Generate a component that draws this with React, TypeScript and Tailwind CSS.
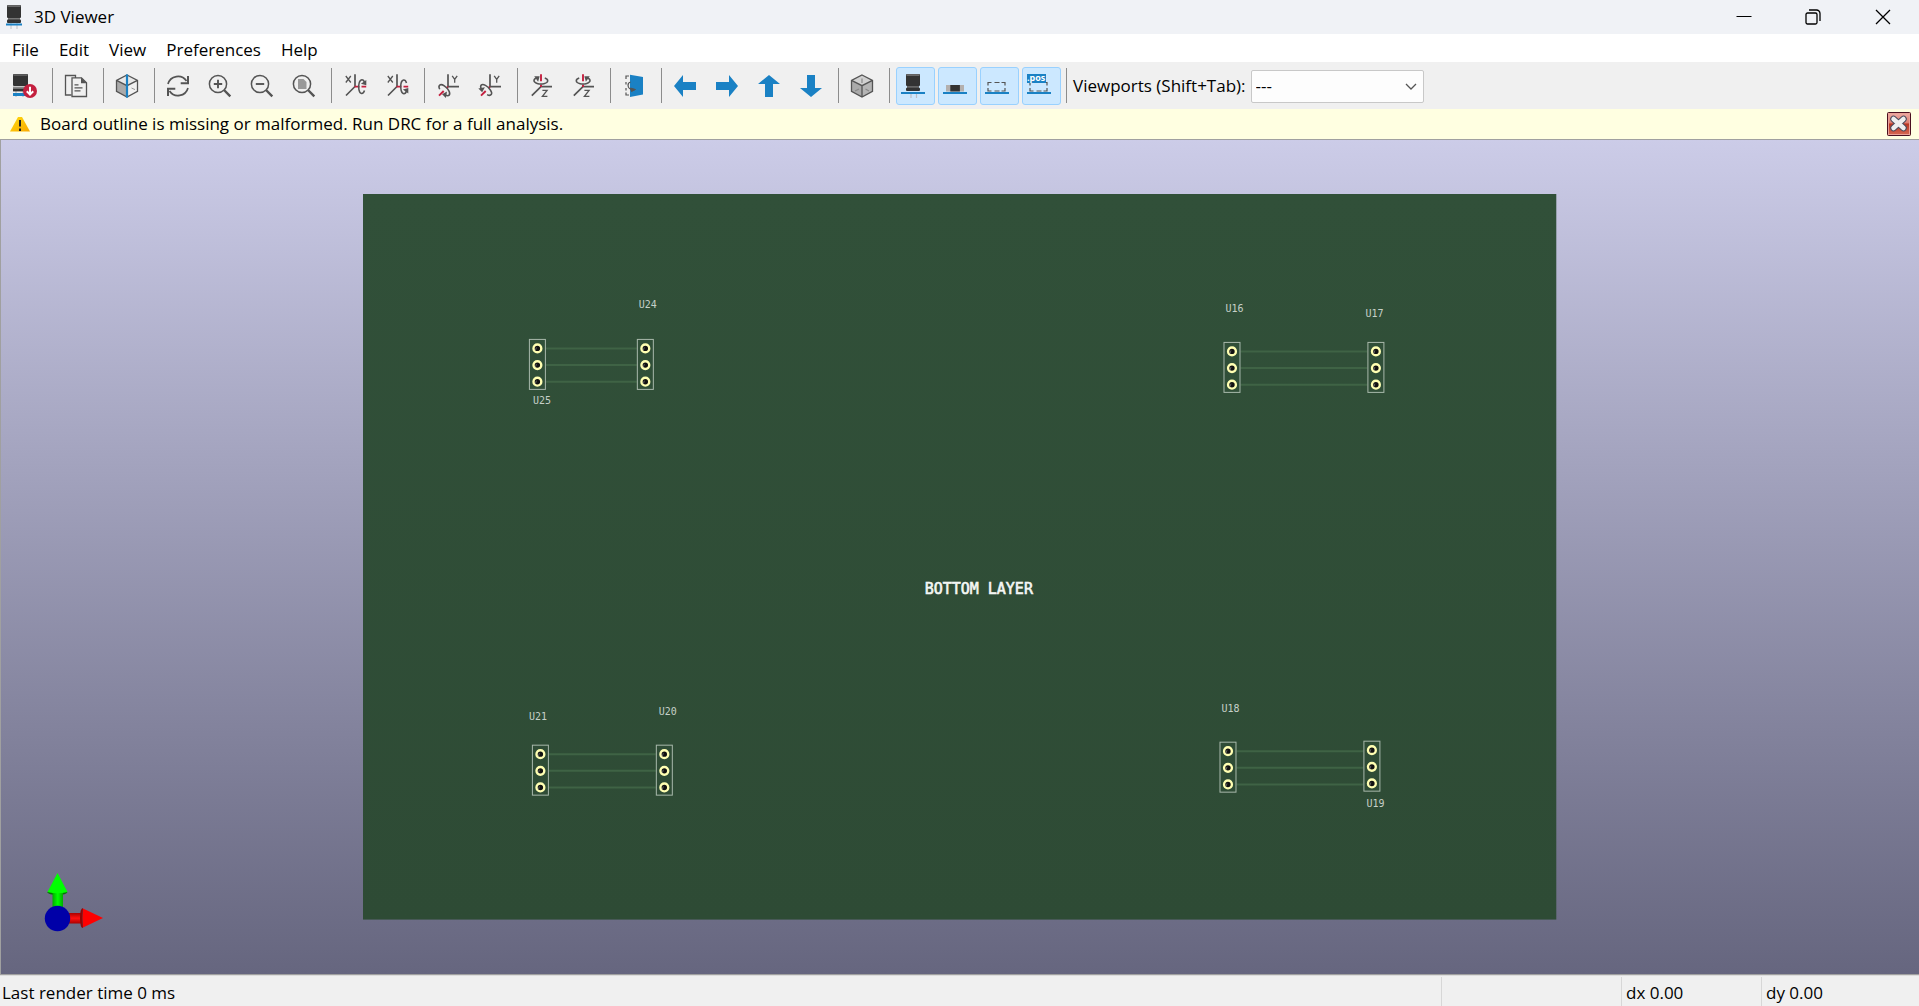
import React from "react";

type IconProps = { children: React.ReactNode };

const Icon = ({ children }: IconProps) => (
  <svg viewBox="0 0 24 24" className="h-6 w-6 shrink-0 overflow-visible" fill="none" aria-hidden="true">
    {children}
  </svg>
);

const GRAY = "#545454";
const RED = "#c4203f";
const BLUE = "#1a81c4";

const Raytrace = () => (
  <Icon>
    <path d="M3 16v7M10 16v7" stroke="#c4c4c4" strokeWidth="1.4" />
    <rect x="0" y="0" width="15" height="12" rx="1" fill="#333" />
    <rect x="0.5" y="0.3" width="14" height="1.5" fill="#666" />
    <rect x="0" y="12.6" width="15" height="1.6" fill="#8a8a8a" />
    <rect x="0" y="14.4" width="15" height="3" fill="#333" />
    <rect x="0" y="19" width="13" height="3" fill={BLUE} />
    <circle cx="17" cy="17" r="7" fill={RED} />
    <path d="M17 12.7v7M13.8 17.2l3.2 3.4 3.2-3.4" stroke="#fff" strokeWidth="2" />
  </Icon>
);

const Copy = () => (
  <Icon>
    <path d="M7.5 21H1.5V1.5h10V4" stroke={GRAY} strokeWidth="1.3" />
    <path d="M8 3.8h9.5l5 5v13.7H8z" stroke={GRAY} strokeWidth="1.3" />
    <path d="M17 3.5v5.8h5.8z" fill={GRAY} />
    <path d="M10.5 10.8h4M10.5 13.8h8M10.5 16.8h6" stroke={GRAY} strokeWidth="1.2" />
  </Icon>
);

const Cube = ({ blue = false }: { blue?: boolean }) => (
  <Icon>
    <path d="M1.5 6.3 12 11.7V23L1.5 17.4z" fill="#aaa" />
    <path d="M12 1 22.5 6.3 12 11.7 1.5 6.3z" fill={blue ? "#e8e8e8" : "#d0d0d0"} />
    <path d="M22.5 6.3 12 11.7V23l10.5-5.6z" fill={blue ? "#f1f1f1" : "#b5b5b5"} />
    <path d="M12 1 22.5 6.3v11L12 23 1.5 17.3v-11zM1.5 6.3 12 11.7l10.5-5.4M12 11.7V23" stroke={GRAY} strokeWidth="1.3" />
    {blue ? (
      <>
        <path d="M12 .4v23.2" stroke={BLUE} strokeWidth="2.2" />
        <path d="m16.5 14 3.5 1.6" stroke="#999" />
      </>
    ) : (
      <path d="M12 4.5V9M5 17l4-2M15.5 15l3.5 2" stroke="#8a8a8a" strokeWidth="1.2" />
    )}
  </Icon>
);

const Refresh = () => (
  <Icon>
    <path d="M2 10A10.3 10.3 0 0 1 20.5 7M22 14A10.3 10.3 0 0 1 3.5 17" stroke={GRAY} strokeWidth="1.7" />
    <path d="M22 2v7.3h-7.3" stroke={GRAY} strokeWidth="2" />
    <path d="M2 22v-7.3h7.3" stroke={GRAY} strokeWidth="2" />
  </Icon>
);

const Magnifier = ({ children }: IconProps) => (
  <Icon>
    <circle cx="10" cy="10" r="8.6" stroke={GRAY} strokeWidth="1.5" />
    <path d="m16 16 6.3 6.3" stroke={GRAY} strokeWidth="2.4" />
    {children}
  </Icon>
);

const Loop = ({ flip }: { flip: boolean }) => (
  <g transform={flip ? "scale(.9 -.9)" : "scale(.9)"}>
    <path d="M3 4.2C1.6 8.8-2.2 8.6-3.2 3.2-4.2-2-2.6-7.8.2-7.8c1.2 0 2.2 1 2.8 3" stroke={GRAY} strokeWidth="1.7" />
    <path d="M5-7.5v6L-1-3.2z" fill={GRAY} />
  </g>
);

const RotateX = ({ flip = false }: { flip?: boolean }) => (
  <Icon>
    <path d="m2.8 2 5 6.5m0-6.5-5 6.5" stroke={GRAY} strokeWidth="1.3" />
    <path d="M12 .3v12.2L3 21.5" stroke={GRAY} strokeWidth="1.7" />
    <path d="M11.5 12.7h5M18.5 12.7h4.7" stroke={RED} strokeWidth="1.8" />
    <g transform="translate(18.8 12.7)"><Loop flip={flip} /></g>
  </Icon>
);

const RotateY = ({ flip = false }: { flip?: boolean }) => (
  <Icon>
    <path d="m16.2 1.8 2.5 3.6 2.5-3.6M18.7 5.4v3.4" stroke={GRAY} strokeWidth="1.3" />
    <path d="M12 .3v12.4h11" stroke={GRAY} strokeWidth="1.7" />
    <path d="m12 12.7-1.500 1.500M7.7 17 3 21.7" stroke={RED} strokeWidth="1.9" />
    <g transform="translate(8.300 16) rotate(135)"><Loop flip={flip} /></g>
  </Icon>
);

const RotateZ = ({ flip = false }: { flip?: boolean }) => (
  <Icon>
    <path d="M13.4 16.4h4.7l-4.7 6h5" stroke={GRAY} strokeWidth="1.3" />
    <path d="M23 12.7H12l-9.2 9" stroke={GRAY} strokeWidth="1.7" />
    <path d="M12 .3v7M12 10.500v2.500" stroke={RED} strokeWidth="1.9" />
    <g transform="translate(12 6.8) rotate(-90)"><Loop flip={flip} /></g>
  </Icon>
);

const FlipBoard = () => (
  <Icon>
    <path d="M7 2H4v3M4 8v2.5M4 14v2.5M4 18.5V21h3" stroke={GRAY} strokeWidth="1.2" />
    <path d="m8 .7 13 2.4v17.4L8 23z" fill={BLUE} />
    <path d="M8.5 8C5 9 5 14.5 10 15.7" stroke={GRAY} strokeWidth="1.2" />
    <path d="m8.5 14 5 1.5-4 2z" fill={GRAY} stroke={GRAY} />
  </Icon>
);

const Arrow = ({ d }: { d: string }) => <Icon><path d={d} fill={BLUE} /></Icon>;

const BoardLine = () => <path d="M0 19h24" stroke={BLUE} strokeWidth="2" />;

const Capacitor = () => (
  <Icon>
    <path d="M10 18v6M15.5 18v6" stroke="#bcbcc6" strokeWidth="1.2" />
    <rect x="5" y="0" width="14" height="12" rx="1" fill="#333" />
    <rect x="5.5" y=".3" width="13" height="1.5" fill="#777" />
    <rect x="6" y="12" width="12" height="2" fill="#666" />
    <rect x="5" y="13.8" width="14" height="3.2" rx="1" fill="#333" />
    <BoardLine />
  </Icon>
);

const Chip = () => (
  <Icon>
    <rect x="3" y="11" width="18" height="6.5" fill="#b4b0ae" />
    <rect x="7.3" y="11" width="9.6" height="6.5" fill="#333" />
    <BoardLine />
  </Icon>
);

const dashedBody = "M3 11.5v-3h3.5M9.5 8.5h5M16.5 8.5H20v3M20 14v3h-3.5M14.5 17h-5M6.5 17H3v-3";

const Unspecified = () => (
  <Icon>
    <path d={dashedBody} stroke={GRAY} strokeWidth="1.2" />
    <BoardLine />
  </Icon>
);

const PosFile = () => (
  <Icon>
    <path d={dashedBody} stroke={GRAY} strokeWidth="1.2" />
    <rect width="19" height="9" fill={BLUE} />
    <text x="0" y="6.5" fontSize="9" fontWeight="700" fontFamily="'Open Sans', sans-serif" fill="#fff">.pos</text>
    <BoardLine />
  </Icon>
);

type Tool = { label: string; icon: React.ReactNode; on?: boolean };

const groups: Tool[][] = [
  [{ label: "Raytrace", icon: <Raytrace /> }],
  [{ label: "Copy image", icon: <Copy /> }],
  [{ label: "Render with raytracing", icon: <Cube blue /> }],
  [
    { label: "Refresh", icon: <Refresh /> },
    { label: "Zoom in", icon: <Magnifier><path d="M10 5.8v8.4M5.8 10h8.4" stroke={GRAY} strokeWidth="1.9" /></Magnifier> },
    { label: "Zoom out", icon: <Magnifier><path d="M5.8 10h8.4" stroke={GRAY} strokeWidth="1.9" /></Magnifier> },
    { label: "Zoom to fit", icon: <Magnifier><path d="M6 5h5.5l3 3v7H6z" fill="#999" /></Magnifier> },
  ],
  [{ label: "Rotate X clockwise", icon: <RotateX /> }, { label: "Rotate X counterclockwise", icon: <RotateX flip /> }],
  [{ label: "Rotate Y clockwise", icon: <RotateY /> }, { label: "Rotate Y counterclockwise", icon: <RotateY flip /> }],
  [{ label: "Rotate Z clockwise", icon: <RotateZ /> }, { label: "Rotate Z counterclockwise", icon: <RotateZ flip /> }],
  [{ label: "Flip board", icon: <FlipBoard /> }],
  [
    { label: "Move left", icon: <Arrow d="M1 12 10 1v7h13v8H10v7z" /> },
    { label: "Move right", icon: <Arrow d="M23 12 14 1v7H1v8h13v7z" /> },
    { label: "Move up", icon: <Arrow d="M12 1 1 10h7v13h8V10h7z" /> },
    { label: "Move down", icon: <Arrow d="M12 23 1 14h7V1h8v13h7z" /> },
  ],
  [{ label: "Orthographic projection", icon: <Cube /> }],
  [
    { label: "Show through hole models", icon: <Capacitor />, on: true },
    { label: "Show SMD models", icon: <Chip />, on: true },
    { label: "Show unspecified models", icon: <Unspecified />, on: true },
    { label: "Show models not in position file", icon: <PosFile />, on: true },
  ],
];

const AppIcon = () => (
  <svg viewBox="0 0 16 24" className="h-6 w-4" fill="none" aria-hidden="true">
    <path d="M5 18v6M11 18v6" stroke="#c8c8cc" strokeWidth="1.2" />
    <rect x="1" y="0" width="14" height="13" rx="1" fill="#333" />
    <rect x="1.5" y=".3" width="13" height="1.5" fill="#777" />
    <rect x="2" y="13" width="12" height="2" fill="#777" />
    <rect x="1" y="14.5" width="14" height="3.5" rx="1" fill="#333" />
    <path d="M0 19.5h16" stroke={BLUE} strokeWidth="2" />
  </svg>
);

type Pair = { left: [number, number]; right: [number, number] };

const pairs: Pair[] = [
  { left: [166, 146], right: [274, 146] },
  { left: [861, 149], right: [1005, 149] },
  { left: [169, 552], right: [293, 552] },
  { left: [857, 549], right: [1001, 548] },
];

const labels: { text: string; x: number; y: number }[] = [
  { text: "U24", x: 276, y: 114 },
  { text: "U25", x: 170, y: 210 },
  { text: "U16", x: 863, y: 118 },
  { text: "U17", x: 1003, y: 123 },
  { text: "U21", x: 166, y: 526 },
  { text: "U20", x: 296, y: 521 },
  { text: "U18", x: 859, y: 518 },
  { text: "U19", x: 1004, y: 613 },
];

const padRows = [8.5, 25.2, 41.8];

const Header = ({ x, y }: { x: number; y: number }) => (
  <g>
    <rect x={x + 0.5} y={y - 0.5} width="16" height="50" fill="none" stroke="#a9b9ac" />
    {padRows.map((dy) => (
      <g key={dy}>
        <circle cx={x + 8.5} cy={y + dy} r="3.9" fill="#111" stroke="#ffffb2" strokeWidth="2.4" />
        <path d={`M${x + 6.5} ${y + dy + 2}l1-3`} stroke="#777" strokeWidth=".8" />
      </g>
    ))}
  </g>
);

const Board = () => (
  <svg viewBox="0 0 1194 726" className="h-[87%] max-w-full" role="img" aria-label="Circuit board, bottom layer">
    <defs>
      <linearGradient id="board" x1="0" y1="0" x2="0" y2="1">
        <stop offset="0" stopColor="#315039" />
        <stop offset="1" stopColor="#2e4b35" />
      </linearGradient>
    </defs>
    <rect width="1194" height="726" fill="url(#board)" />
    {pairs.map(({ left, right }) => (
      <g key={`${left[0]}-${left[1]}`}>
        {padRows.map((dy) => (
          <path key={dy} d={`M${left[0] + 17} ${left[1] + dy}H${right[0]}`} stroke="#3f6345" strokeWidth="2" />
        ))}
        <Header x={left[0]} y={left[1]} />
        <Header x={right[0]} y={right[1]} />
      </g>
    ))}
    <g fontFamily="'DejaVu Sans Mono', monospace" fontSize="10" fill="#c6d0c8">
      {labels.map((l) => <text key={l.text} x={l.x} y={l.y}>{l.text}</text>)}
    </g>
    <text x="562" y="400" fontFamily="'DejaVu Sans Mono', monospace" fontSize="15" fill="#f4f7f4" stroke="#f4f7f4" strokeWidth=".6">BOTTOM LAYER</text>
  </svg>
);

const Axes = () => (
  <svg viewBox="0 0 60 60" className="absolute bottom-[41px] left-[42px] h-[60px] w-[60px]" role="img" aria-label="Axes">
    <defs>
      <linearGradient id="gy"><stop offset="0" stopColor="#0a0" /><stop offset=".5" stopColor="#0f0" /><stop offset="1" stopColor="#0a0" /></linearGradient>
      <linearGradient id="rx" x1="0" y1="0" x2="0" y2="1"><stop offset="0" stopColor="#a00" /><stop offset=".5" stopColor="#f11" /><stop offset="1" stopColor="#a00" /></linearGradient>
    </defs>
    <path d="M4 19q10.5-2 20.5 0-1 3-10 3T4 19z" fill="#087008" />
    <rect x="9.5" y="19" width="10.500" height="17" fill="url(#gy)" />
    <path d="M14.500 0 24.5 19q-10 2.500-20 0z" fill="#0f0" />
    <rect x="26" y="40" width="13" height="10.500" fill="url(#rx)" />
    <path d="M60 45 40 35.500q-1.500 9.500 0 19z" fill="#f00" />
    <path d="M40 35q-3 0-3 10t3 10q-1-10 0-20z" fill="#8c0808" />
    <circle cx="14.5" cy="45.5" r="12.7" fill="#0000a8" />
  </svg>
);

const menus = ["File", "Edit", "View", "Preferences", "Help"];

export default function App() {
  return (
    <div className="flex h-screen flex-col bg-[#f0f0f0] font-['Open_Sans',sans-serif] text-[17px] leading-6 text-black">
      <header className="flex h-[34px] shrink-0 items-center bg-[#f0f2f6] pl-[6px]">
        <AppIcon />
        <h1 className="ml-3 grow">3D Viewer</h1>
        <div className="flex h-full">
          <button aria-label="Minimize" className="flex w-[69px] items-center justify-center">
            <svg viewBox="0 0 16 16" className="h-4 w-4"><path d="M.5 7.5h15" stroke="#000" /></svg>
          </button>
          <button aria-label="Restore" className="flex w-[69px] items-center justify-center">
            <svg viewBox="0 0 16 16" className="h-4 w-4" fill="none" stroke="#000" strokeWidth="1.3">
              <rect x="1" y="4" width="11" height="11" rx="1.5" />
              <path d="M4 1h7.500A3.500 3.500 0 0 1 15 4.500V12" />
            </svg>
          </button>
          <button aria-label="Close" className="flex w-[72px] items-center justify-center">
            <svg viewBox="0 0 16 16" className="h-4 w-4"><path d="m1 1 14 14M15 1 1 15" stroke="#000" strokeWidth="1.3" /></svg>
          </button>
        </div>
      </header>

      <nav className="flex h-7 shrink-0 bg-white pt-[3px] pl-[2px]">
        {menus.map((m) => (
          <button key={m} className="px-[10px]">{m}</button>
        ))}
      </nav>

      <div role="toolbar" className="flex h-[47px] shrink-0 items-center bg-[#f0f0f0] pl-2">
        {groups.map((group) => (
          <React.Fragment key={group[0].label}>
            <div className="flex gap-[3px]">
              {group.map((t) => (
                <button
                  key={t.label}
                  aria-label={t.label}
                  aria-pressed={t.on}
                  className={
                    t.on
                      ? "flex h-[38px] w-[39px] items-center rounded-[3px] border border-[#99d1ff] bg-[#cce8ff] pl-1"
                      : "flex h-[38px] w-[39px] items-center rounded-[3px] border border-transparent pl-1"
                  }
                >
                  {t.icon}
                </button>
              ))}
            </div>
            <div className="mr-[6px] ml-[5px] h-[35px] w-px shrink-0 bg-[#8c8c8c]" />
          </React.Fragment>
        ))}
        <label htmlFor="viewports" className="shrink-0">Viewports (Shift+Tab):</label>
        <div className="relative ml-[5px] w-[173px] pt-px">
          <select id="viewports" className="block h-[33px] w-full appearance-none rounded-[2px] border border-[#c8c8c8] bg-[#fdfdfd] pl-1">
            <option>---</option>
          </select>
          <svg viewBox="0 0 12 8" className="pointer-events-none absolute top-[14px] right-[7px] h-2 w-3" fill="none">
            <path d="m1 1 5 5 5-5" stroke="#555" strokeWidth="1.3" />
          </svg>
        </div>
      </div>

      <div role="alert" className="flex h-[30px] shrink-0 items-center bg-[#ffffe1] pr-2 pl-[10px]">
        <svg viewBox="0 0 20 15" className="h-[15px] w-5" aria-hidden="true">
          <defs><linearGradient id="warn" x1="0" y1="0" x2="1" y2="1"><stop offset="0" stopColor="#ffdc10" /><stop offset="1" stopColor="#f8a800" /></linearGradient></defs>
          <path d="M8 0h4l8 14.5H0z" fill="url(#warn)" />
          <path d="M10 3v6.5M10 11.5V14" stroke="#222" strokeWidth="2" />
        </svg>
        <p className="ml-[10px] grow">Board outline is missing or malformed. Run DRC for a full analysis.</p>
        <button aria-label="Dismiss message">
          <svg viewBox="0 0 24 24" className="h-6 w-6">
            <defs><linearGradient id="dismiss" x1="0" y1="0" x2="0" y2="1"><stop offset="0" stopColor="#f0b0a8" /><stop offset=".45" stopColor="#dc7c70" /><stop offset=".5" stopColor="#b83420" /><stop offset="1" stopColor="#d86c58" /></linearGradient></defs>
            <rect x=".5" y=".5" width="23" height="23" rx="1" fill="url(#dismiss)" stroke="#4a1020" />
            <rect x="1.5" y="1.5" width="21" height="21" fill="none" stroke="#eaa198" />
            <path d="m6.500 7 10 9M16.500 7l-10 9" stroke="#4a4a5c" strokeWidth="6.500" strokeLinecap="round" />
            <path d="m6.500 7 10 9M16.500 7l-10 9" stroke="#eee" strokeWidth="4.500" strokeLinecap="round" />
          </svg>
        </button>
      </div>

      <main className="relative flex min-h-0 grow items-center justify-center border-t border-b border-l border-[#a0a0a0] bg-linear-to-b from-[#cccce8] to-[#66667f]">
        <Board />
        <Axes />
      </main>

      <footer className="flex h-[31px] shrink-0 border-t border-[#dcdcdc] pt-px">
        <div className="grow border-r border-[#d7d7d7] pt-1 pl-[2px]">Last render time 0 ms</div>
        <div className="w-[180px] border-r border-[#d7d7d7]" />
        <div className="w-[140px] border-r border-[#d7d7d7] pt-1 pl-1">dx 0.00</div>
        <div className="w-[157px] pt-1 pl-1">dy 0.00</div>
      </footer>
    </div>
  );
}
